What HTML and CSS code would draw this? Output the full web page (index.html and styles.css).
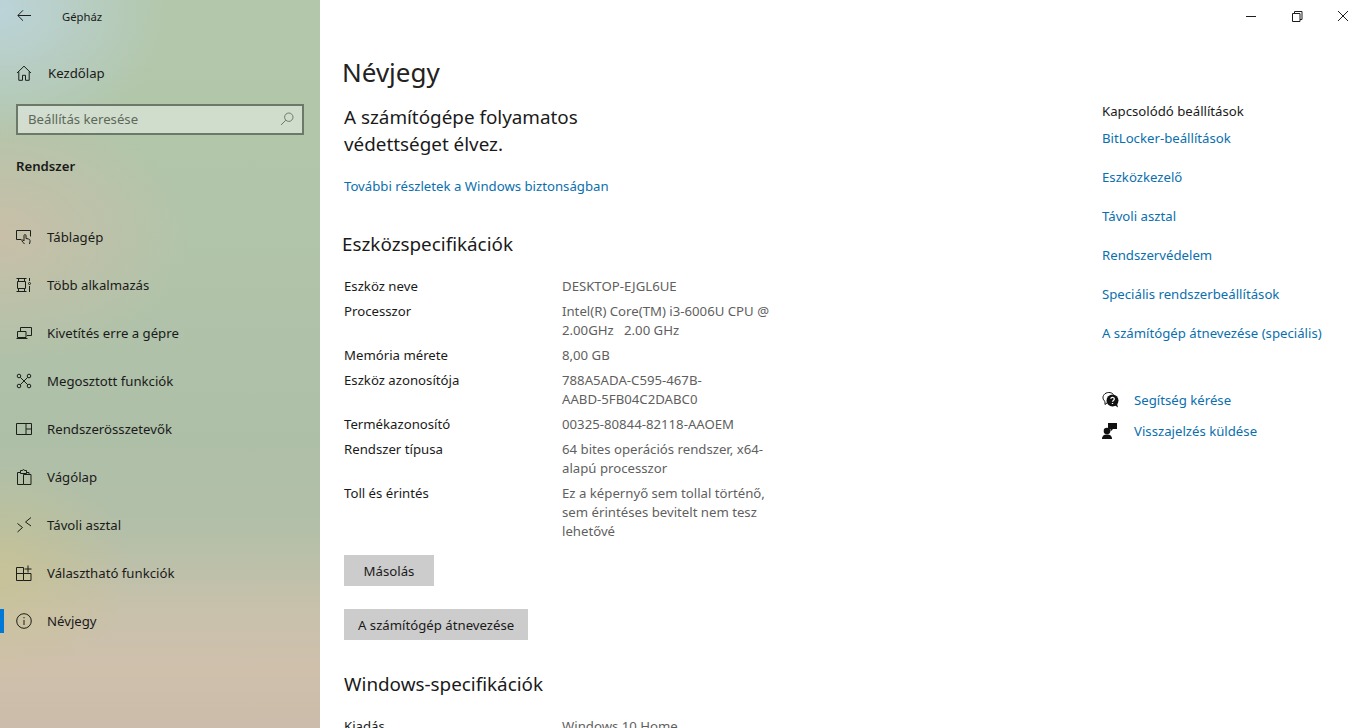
FILE: index.html
```html
<!doctype html>
<html lang="hu">
  <head>
    <meta charset="UTF-8" />
    <title>Gépház</title>
    <link rel="stylesheet" href="styles.css">
  </head>
  <body>
    <div class="window">
      <aside class="sidebar">
        <div class="app-title">
          <svg class="back" width="16" height="16" viewBox="0 0 16 16"><path d="M15 7.500H2M7 2.300 1.800 7.500 7 12.700"/></svg>
          <span>Gépház</span>
        </div>
        <div class="home">
          <svg class="icon" width="16" height="16" viewBox="0 0 16 16"><path d="M1 8 8 1.200 15 8M2.800 6.600v8.700h3.700v-5h3v5h3.700V6.600"/></svg>
          <span>Kezdőlap</span>
        </div>
        <div class="search">
          <span>Beállítás keresése</span>
          <svg class="icon search-icon" width="14" height="14" viewBox="0 0 14 14"><circle cx="8.800" cy="5.200" r="4.200"/><path d="M5.800 8.200 1 13"/></svg>
        </div>
        <div class="group-title">Rendszer</div>
        <nav class="nav">
          <div class="nav-item">
            <svg class="icon" width="16" height="16" viewBox="0 0 16 16"><path d="M5.500 10.500H.5V1.500h14v6"/><path d="M8.500 15c-1-1.300-2-2.200-2.500-3-.5-.9.500-1.500 1.200-.8l.8.800V6.500c0-1.200 2-1.200 2 0v3l2.500.5c1 .2 1.500.8 1.500 1.700v1.300l-.6 2"/></svg>
            <span>Táblagép</span>
          </div>
          <div class="nav-item">
            <svg class="icon" width="16" height="16" viewBox="0 0 16 16"><path d="M.5 1.500h10M.5 14.500h10M1.500 4.500h8v7h-8zM2.500 11.500v3M8.500 11.500v3M2.500 1.500v3M8.500 1.500v3M13.500 1v3M13.500 9v6"/><circle cx="13.500" cy="6.500" r="1" class="dot"/></svg>
            <span>Több alkalmazás</span>
          </div>
          <div class="nav-item">
            <svg class="icon" width="16" height="16" viewBox="0 0 16 16"><path d="M4.500 6V2.500h11v8H11M1.500 6.500h8.500v6H1.500zM.5 13.500h11"/></svg>
            <span>Kivetítés erre a gépre</span>
          </div>
          <div class="nav-item">
            <svg class="icon" width="16" height="16" viewBox="0 0 16 16"><circle cx="3" cy="3" r="1.800"/><circle cx="13" cy="3" r="1.800"/><circle cx="3" cy="13" r="1.800"/><circle cx="13" cy="13" r="1.800"/><path d="M4.300 4.300l7.400 7.400M11.700 4.300l-7.400 7.400"/></svg>
            <span>Megosztott funkciók</span>
          </div>
          <div class="nav-item">
            <svg class="icon" width="16" height="16" viewBox="0 0 16 16"><path d="M.5 2.500h15v11H.5zM10 2.500v11M10 8h5.500"/></svg>
            <span>Rendszerösszetevők</span>
          </div>
          <div class="nav-item">
            <svg class="icon" width="16" height="16" viewBox="0 0 16 16"><path d="M7.500 5.500H15v10H7.500zM7.500 15.500h-6V3.500h3M10.500 3.500H13v2M4.500 1.500h2c0-1.200 2-1.200 2 0h2v3h-6z"/></svg>
            <span>Vágólap</span>
          </div>
          <div class="nav-item">
            <svg class="icon" width="16" height="16" viewBox="0 0 16 16"><path d="M1.500 6.500 6.500 10.500 1.500 15M15 .5 9.500 5l5.500 4"/></svg>
            <span>Távoli asztal</span>
          </div>
          <div class="nav-item">
            <svg class="icon" width="16" height="16" viewBox="0 0 16 16"><path d="M.5 2.500h7v13h-7zM.5 8.500h14.500v7H7.500M12 .5v7M8.500 4h7"/></svg>
            <span>Választható funkciók</span>
          </div>
          <div class="nav-item active">
            <svg class="icon" width="16" height="16" viewBox="0 0 16 16"><circle cx="8" cy="8" r="7.300"/><path d="M8 7v5M8 4v1.300"/></svg>
            <span>Névjegy</span>
          </div>
        </nav>
      </aside>

      <main class="main">
        <div class="caption">
          <svg class="cap-icon" width="46" height="32" viewBox="0 0 46 32"><path d="M18 16.500h10"/></svg>
          <svg class="cap-icon" width="46" height="32" viewBox="0 0 46 32"><path d="M18.500 13.500h7.500v8h-7.500zM20.500 13.500v-2h7.500v8h-2"/></svg>
          <svg class="cap-icon" width="46" height="32" viewBox="0 0 46 32"><path d="M18 11l10 10M28 11 18 21"/></svg>
        </div>
        <div class="columns">
          <section class="content">
            <h1>Névjegy</h1>
            <p class="status">A számítógépe folyamatos<br />védettséget élvez.</p>
            <a class="link status-link">További részletek a Windows biztonságban</a>
            <h2 class="specs-title">Eszközspecifikációk</h2>
            <div class="specs">
              <div class="label">Eszköz neve</div>
              <div class="value">DESKTOP-EJGL6UE</div>
              <div class="label">Processzor</div>
              <div class="value">Intel(R) Core(TM) i3-6006U CPU @<br />2.00GHz&nbsp;&nbsp; 2.00 GHz</div>
              <div class="label">Memória mérete</div>
              <div class="value">8,00 GB</div>
              <div class="label">Eszköz azonosítója</div>
              <div class="value">788A5ADA-C595-467B-<br />AABD-5FB04C2DABC0</div>
              <div class="label">Termékazonosító</div>
              <div class="value">00325-80844-82118-AAOEM</div>
              <div class="label">Rendszer típusa</div>
              <div class="value">64 bites operációs rendszer, x64-<br />alapú processzor</div>
              <div class="label">Toll és érintés</div>
              <div class="value">Ez a képernyő sem tollal történő,<br />sem érintéses bevitelt nem tesz<br />lehetővé</div>
            </div>
            <button class="btn copy-btn">Másolás</button>
            <button class="btn rename-btn">A számítógép átnevezése</button>
            <h2 class="win-title">Windows-specifikációk</h2>
            <div class="specs">
              <div class="label">Kiadás</div>
              <div class="value">Windows 10 Home</div>
            </div>
          </section>

          <aside class="related">
            <div class="related-title">Kapcsolódó beállítások</div>
            <a class="link related-link">BitLocker-beállítások</a>
            <a class="link related-link">Eszközkezelő</a>
            <a class="link related-link">Távoli asztal</a>
            <a class="link related-link">Rendszervédelem</a>
            <a class="link related-link">Speciális rendszerbeállítások</a>
            <a class="link related-link">A számítógép átnevezése (speciális)</a>
            <div class="help">
              <div class="help-row">
                <svg class="help-icon" width="17" height="16" viewBox="0 0 17 16">
                  <path class="line" d="M5.500 10.500 3 12.500v-3C.5 7.500.5 4.500 2 2.800 4-.2 9.500-.2 11.500 2.500"/>
                  <circle class="fill" cx="10.500" cy="8.500" r="6"/>
                  <path class="fill" d="M12.500 13l3.500 2.500-1-4z"/>
                  <path class="qm" d="M8.800 6.800c.2-2 3.600-1.800 3.500.2 0 1.400-1.800 1.400-1.800 2.800M10.500 11v1"/>
                </svg>
                <a class="link">Segítség kérése</a>
              </div>
              <div class="help-row">
                <svg class="help-icon" width="17" height="16" viewBox="0 0 17 16">
                  <circle class="fill" cx="5" cy="8" r="3.300"/>
                  <path class="fill" d="M0 16c0-3.300 2-4.500 5-4.500s5 1.200 5 4.500z"/>
                  <path class="fill" d="M6 0h9v6h-4l-2.500 2.500V6H6z"/>
                </svg>
                <a class="link">Visszajelzés küldése</a>
              </div>
            </div>
          </aside>
        </div>
      </main>
    </div>
  </body>
</html>
```

FILE: styles.css
```css
* {
  box-sizing: border-box;
}
html,
body {
  margin: 0;
  height: 100%;
  overflow: hidden;
}
body {
  font-family: "Noto Sans", "Open Sans", sans-serif;
  font-size: 13.2px;
  color: #1a1a1a;
  background: #fff;
}
.window {
  display: flex;
  height: 728px;
}
.icon,
.back,
.cap-icon {
  fill: none;
  stroke: #1a1f1a;
  stroke-width: 1;
  flex: none;
}

/* sidebar */
.sidebar {
  width: 320px;
  flex: none;
  background:
    radial-gradient(ellipse 170px 130px at 0 10px, rgba(188, 212, 220, 0.95), rgba(188, 212, 220, 0)),
    radial-gradient(ellipse 190px 130px at 0 235px, rgba(203, 190, 168, 0.9), rgba(203, 190, 168, 0)),
    radial-gradient(ellipse 130px 110px at 0 570px, rgba(205, 195, 140, 0.6), rgba(205, 195, 140, 0)),
    linear-gradient(180deg, #b3c7aa 0, #b1c5aa 230px, #aebfa8 440px, #b3bfa8 530px, #c8c1ab 610px, #cfc0ac 670px, #cbbcab 728px);
}
.app-title {
  display: flex;
  align-items: center;
  height: 32px;
  padding-left: 16px;
  font-size: 11.3px;
}
.back {
  width: 16px;
  margin-right: 30px;
}
.home {
  display: flex;
  align-items: center;
  gap: 16px;
  height: 48px;
  margin-top: 17px;
  padding-left: 16px;
}
.search {
  display: flex;
  align-items: center;
  justify-content: space-between;
  width: 288px;
  height: 31px;
  margin: 7px 0 0 16px;
  padding: 0 8px 2px 10px;
  border: 2px solid #6b7a68;
  background: rgba(255, 255, 255, 0.4);
  color: #5c685a;
}
.search-icon {
  stroke: #6b7a68;
}
.group-title {
  margin: 21px 0 0 16px;
  font-weight: 600;
  line-height: 20px;
}
.nav {
  margin-top: 37px;
}
.nav-item {
  position: relative;
  display: flex;
  align-items: center;
  gap: 15px;
  height: 48px;
  padding-left: 16px;
}
.nav-item.active::before {
  content: "";
  position: absolute;
  left: 0;
  top: 12px;
  width: 4px;
  height: 24px;
  background: #0078d7;
}

/* main */
.main {
  flex: 1;
  display: flex;
  flex-direction: column;
  min-width: 0;
}
.caption {
  display: flex;
  justify-content: flex-end;
  height: 32px;
}
.columns {
  display: flex;
  justify-content: space-between;
  height: 696px;
  overflow: hidden;
}
.content {
  width: 600px;
  padding-left: 22px;
}
h1 {
  margin: 21px 0 0;
  font-size: 26px;
  font-weight: 400;
  line-height: 38px;
  color: #222;
}
.status {
  margin: 13px 0 0 2px;
  font-size: 18.85px;
  line-height: 27px;
}
.link {
  color: #0b6fae;
}
.status-link {
  display: block;
  margin: 18px 0 0 2px;
  line-height: 20px;
}
h2 {
  font-size: 18.85px;
  font-weight: 400;
  line-height: 28px;
}
.specs-title {
  margin: 34px 0 0;
}
.specs {
  display: grid;
  grid-template-columns: 218px 230px;
  row-gap: 6px;
  margin: 19px 0 0 2px;
  line-height: 19px;
}
.value {
  color: #5f5f5f;
}
.btn {
  display: block;
  height: 31px;
  margin-left: 2px;
  padding: 0 14px;
  border: 0;
  background: #ccc;
  color: #1a1a1a;
  font: inherit;
}
.copy-btn {
  width: 90px;
  margin-top: 14px;
}
.rename-btn {
  margin-top: 23px;
}
.win-title {
  margin: 30px 0 0 2px;
}

/* right column */
.related {
  width: 264px;
  padding-top: 69px;
}
.related-title {
  line-height: 20px;
}
.related-link {
  display: block;
  margin-bottom: 19px;
  line-height: 20px;
}
.related-title + .related-link {
  margin-top: 7px;
}
.help {
  margin-top: 41px;
}
.help-row {
  display: flex;
  align-items: center;
  gap: 15px;
  height: 31px;
}
.help-icon {
  flex: none;
}
.help-icon .fill {
  fill: #111;
}
.help-icon .line {
  fill: none;
  stroke: #111;
}
.help-icon .qm {
  fill: none;
  stroke: #fff;
  stroke-width: 1.300;
}
```
